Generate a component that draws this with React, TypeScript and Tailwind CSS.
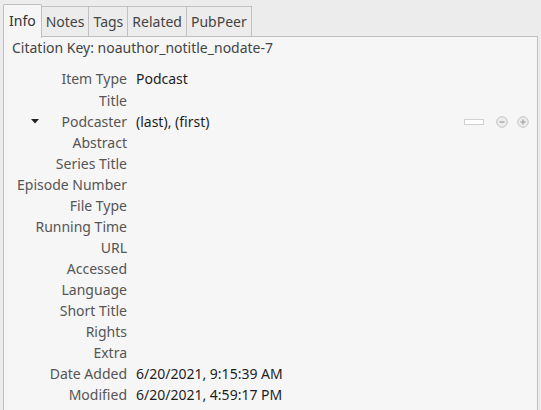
const rows: [string, string][] = [
  ['Item Type', 'Podcast'],
  ['Title', ''],
  ['Podcaster', '(last), (first)'],
  ['Abstract', ''],
  ['Series Title', ''],
  ['Episode Number', ''],
  ['File Type', ''],
  ['Running Time', ''],
  ['URL', ''],
  ['Accessed', ''],
  ['Language', ''],
  ['Short Title', ''],
  ['Rights', ''],
  ['Extra', ''],
  ['Date Added', '6/20/2021, 9:15:39 AM'],
  ['Modified', '6/20/2021, 4:59:17 PM'],
]

const tabs = ['Notes', 'Tags', 'Related', 'PubPeer']

function CircleBtn({ plus }: { plus?: boolean }) {
  return (
    <svg width="12" height="12" viewBox="0 0 12 12">
      <circle cx="6" cy="6" r="5.3" fill="#ececec" stroke="#c4c4c4" />
      <path d="M3.5 6h5" stroke="#a8a8a8" strokeWidth="1.4" />
      {plus && <path d="M6 3.5v5" stroke="#a8a8a8" strokeWidth="1.4" />}
    </svg>
  )
}

export default function App() {
  return (
    <div className="w-[541px] h-[410px] overflow-hidden bg-[#ececec] pl-[3px] pr-[3px] pt-[4px] text-[14px] leading-none" style={{ fontFamily: '"Noto Sans", sans-serif' }}>
      {/* Tabs */}
      <div className="flex items-end h-[33px] relative z-10">
        <div className="h-[34px] px-[5px] pb-[2px] flex items-center border border-b-0 border-[#c0c0c0] bg-[#f6f6f6] text-[#333] rounded-t-[2px] -mb-px">
          Info
        </div>
        {tabs.map((t) => (
          <div key={t} className="h-[31px] px-[4px] flex items-center border border-l-0 border-[#c0c0c0] bg-[#ececec] text-[#444]">
            {t}
          </div>
        ))}
      </div>

      {/* Panel */}
      <div className="w-[535px] h-[400px] border border-[#c0c0c0] bg-[#f6f6f6] -mt-px">
        <div className="pl-[8px] pt-[2px] h-[28px] text-[#444] flex items-start">
          <span className="pt-[2px]">Citation Key: noauthor_notitle_nodate-7</span>
        </div>
        <div className="flex flex-col pt-[2px]">
          {rows.map(([label, value], i) => (
            <div key={label} className={`flex items-center ${i === 0 ? 'h-[23px]' : 'h-[21px]'}`}>
              <div className="w-[123px] flex items-center justify-end text-[#555] shrink-0">
                {label === 'Podcaster' && (
                  <svg width="8" height="5" viewBox="0 0 8 5" className="mr-auto ml-[27px]">
                    <path d="M0 0h8L4 4.5z" fill="#222" />
                  </svg>
                )}
                {label}
              </div>
              <div className="pl-[9px] text-[#1e1e1e] flex-1">{value}</div>
              {label === 'Podcaster' && (
                <div className="flex items-center gap-[9px] pr-[8px]">
                  <div className="w-[20px] h-[6px] bg-white border border-[#d0d0d0] mr-[3px]" />
                  <CircleBtn />
                  <CircleBtn plus />
                </div>
              )}
            </div>
          ))}
        </div>
      </div>
    </div>
  )
}
